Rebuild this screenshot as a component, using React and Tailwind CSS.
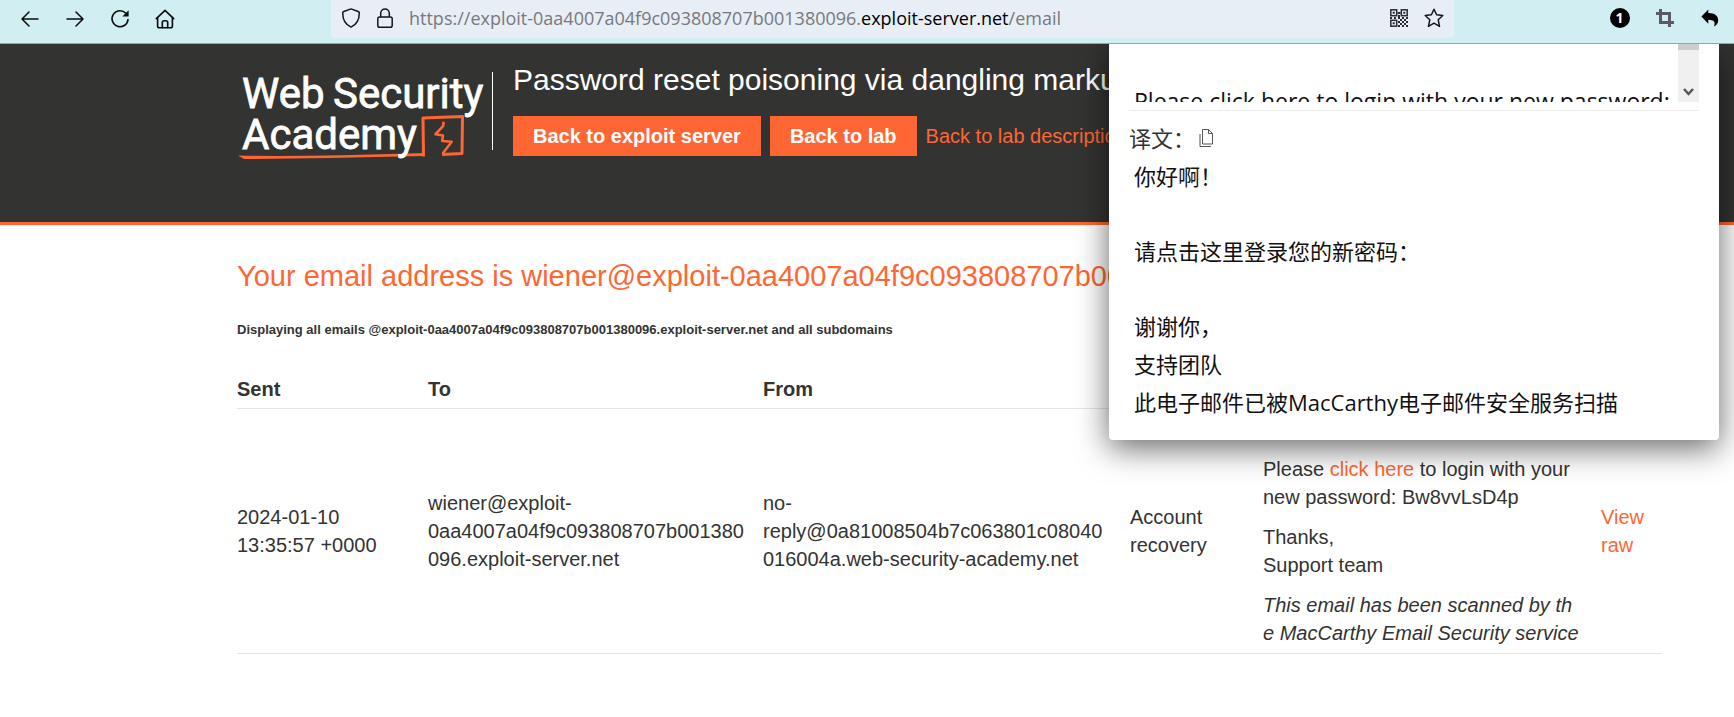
const toolButton = "flex h-8 w-[45px] items-center justify-center";

function ArrowIcon({ flip }) {
  return (
    <svg width="18" height="18" viewBox="0 0 18 18" className={flip ? "rotate-180" : ""} fill="none" stroke="#0c0c0d" strokeWidth="1.5" strokeLinecap="round" strokeLinejoin="round">
      <path d="M17 9H1M8 2L1 9l7 7" />
    </svg>
  );
}

function ReloadIcon() {
  return (
    <svg width="20" height="20" viewBox="0 0 20 20" fill="none" stroke="#0c0c0d" strokeWidth="1.6" strokeLinecap="round">
      <path d="M15.8 4.2A8 8 0 1 0 18 10.6" />
      <path d="M18.6 1.2v6.2h-6.2z" fill="#0c0c0d" stroke="none" />
    </svg>
  );
}

function HomeIcon() {
  return (
    <svg width="20" height="20" viewBox="0 0 20 20" fill="none" stroke="#0c0c0d" strokeWidth="1.6" strokeLinecap="round" strokeLinejoin="round">
      <path d="M1.3 9.6L10 1.3l8.7 8.3" />
      <path d="M2.6 8.8V17a1.8 1.8 0 0 0 1.8 1.8h11.2a1.8 1.8 0 0 0 1.8-1.8V8.8" />
      <path d="M7.3 18.6v-5a1.8 1.8 0 0 1 1.8-1.8h1.8a1.8 1.8 0 0 1 1.8 1.8v5" />
    </svg>
  );
}

function ShieldIcon() {
  return (
    <svg width="20" height="20" viewBox="0 0 20 20" fill="none" stroke="#15141a" strokeWidth="1.5" strokeLinejoin="round">
      <path d="M10 .9l7.2 2.6q1.1.4 1.1 1.6C18.3 12.5 15 17 10 19.1 5 17 1.7 12.5 1.7 5.1q0-1.2 1.1-1.6z" />
    </svg>
  );
}

function LockIcon() {
  return (
    <svg width="16" height="20" viewBox="0 0 16 20" fill="none" stroke="#15141a" strokeWidth="1.5">
      <rect x=".8" y="9" width="14.4" height="10.2" rx="1.8" />
      <path d="M3.7 9V5.2a4.3 4.3 0 0 1 8.6 0V9" />
    </svg>
  );
}

function QrIcon() {
  return (
    <svg width="18" height="18" viewBox="0 0 18 18" fill="#2b2a33">
      <g fill="none" stroke="#2b2a33" strokeWidth="1.5">
        <rect x=".8" y=".8" width="5.9" height="5.9" />
        <rect x="11.3" y=".8" width="5.9" height="5.9" />
        <rect x=".8" y="11.3" width="5.9" height="5.9" />
      </g>
      <path d="M2.7 2.7h2v2h-2zM13.3 2.7h2v2h-2zM2.7 13.3h2v2h-2zM7.5 3h3v2h-3zM8 6h2v2H8zM0 8h2v2H0zM4 8h2v2H4zM8 8h2v2H8zM12 8h2v2h-2zM16 8h2v2h-2zM10 10h2v2h-2zM14 10h2v2h-2zM8 12h2v2H8zM12 12h2v2h-2zM16 12h2v2h-2zM10 14h2v2h-2zM14 14h2v2h-2zM8 16h2v2H8zM12 16h2v2h-2zM16 16h2v2h-2z" />
    </svg>
  );
}

function StarIcon() {
  return (
    <svg width="20" height="20" viewBox="0 0 20 20" fill="none" stroke="#15141a" strokeWidth="1.5" strokeLinejoin="round">
      <path d="M10 1.2l2.6 5.6 6.2.7-4.6 4.2 1.3 6.7L10 15.2l-5.5 3.2 1.3-6.7L1.2 7.5l6.2-.7z" />
    </svg>
  );
}

function CropIcon() {
  return (
    <svg width="18" height="18" viewBox="0 0 18 18" fill="none" stroke="#5b5b66" strokeWidth="3">
      <path d="M4.5 0v13.5H18M0 4.5h13.5V18" />
    </svg>
  );
}

function ReplyIcon() {
  return (
    <svg width="18" height="18" viewBox="0 0 18 18" fill="#000">
      <path d="M7.3.4v3.7c6.4.1 9.9 2.6 9.9 7.3 0 2.6-1.7 4.9-4.3 6.2 1.9-4.4.3-6.7-5.6-6.8v3.9L.4 7.5z" />
    </svg>
  );
}

function CopyIcon() {
  return (
    <svg width="14" height="18" viewBox="0 0 14 18" fill="none" stroke="#555" strokeWidth="1">
      <path d="M3.5.5h6l4 4v10.5h-10zM9.5.5v4h4M1 5v12.5h11" />
    </svg>
  );
}

function Logo() {
  return (
    <svg width="256" height="94" viewBox="0 0 256 94" role="img" aria-label="Web Security Academy">
      <g fill="none" stroke="#f63" strokeLinejoin="round">
        <path d="M187.5 87.5L187 49l39.5-1.500L226 84.500l-20 1" strokeWidth="3" />
        <path d="M207.7 52.7l-.7 4.5-7.5 8 7.5 1.3-.8 5.5 9.5.8-9 11.7" strokeWidth="2.6" />
      </g>
      <path d="M2 86.500q60 1.500 186-2.500v3Q80 89.500 8 90z" fill="#f63" />
      <g fill="#fff" stroke="#fff" strokeWidth=".8" fontFamily="Roboto, sans-serif" fontSize="42">
        <text x="6" y="39">Web</text>
        <text x="97" y="39">Security</text>
        <text x="6" y="80">Academy</text>
      </g>
    </svg>
  );
}

function BrowserBar() {
  return (
    <div className="relative z-20 flex h-11 items-start border-b border-[#94a8ab] bg-[#d1eef2]">
      <div className="flex w-[331px] pt-[3px] pl-[7px]">
        <button aria-label="Back" className={toolButton}><ArrowIcon /></button>
        <button aria-label="Forward" className={toolButton}><ArrowIcon flip /></button>
        <button aria-label="Reload" className={toolButton}><ReloadIcon /></button>
        <button aria-label="Home" className={toolButton}><HomeIcon /></button>
      </div>
      <div className="flex h-[38px] min-w-0 flex-1 items-center gap-4 rounded-b-[4px] bg-[#e8eef5] px-[10px] pb-[2px]">
        <button aria-label="Tracking protection"><ShieldIcon /></button>
        <button aria-label="Site information"><LockIcon /></button>
        <div className="min-w-0 flex-1 truncate font-['Open_Sans',sans-serif] text-[18px] leading-6 text-[#77797d]" role="textbox" aria-label="Address" tabIndex={0}>
          https://exploit-0aa4007a04f9c093808707b001380096.<span className="text-black">exploit-server.net</span>/email
        </div>
        <button aria-label="QR code"><QrIcon /></button>
        <button aria-label="Bookmark this page"><StarIcon /></button>
      </div>
      <div className="flex w-[280px] justify-end pt-[2px] pr-[2px]">
        <button aria-label="Notifications" className={toolButton}>
          <span className="flex size-5 items-center justify-center rounded-full bg-black font-['Open_Sans',sans-serif] text-[14px] leading-none font-bold text-white">1</span>
        </button>
        <button aria-label="Crop" className={toolButton}><CropIcon /></button>
        <button aria-label="Undo" className={toolButton}><ReplyIcon /></button>
      </div>
    </div>
  );
}

function LabHeader() {
  return (
    <header className="h-[181px] overflow-hidden border-b-[3px] border-[#f63] bg-[#333332] pr-[72px] pl-[236px]">
      <div className="flex pt-[18px]">
        <a href="#academy" className="block shrink-0 pt-[7px]"><Logo /></a>
        <div className="mt-[10px] h-[78px] w-px shrink-0 bg-white" />
        <div className="min-w-0 pl-5">
          <h2 className="text-[30px] leading-9 whitespace-nowrap text-white">Password reset poisoning via dangling markup</h2>
          <div className="mt-[18px] flex h-10 items-center whitespace-nowrap">
            <a href="#exploit-server" className="bg-[#f63] px-5 leading-10 font-bold text-white">Back to exploit server</a>
            <a href="#lab" className="ml-[9px] bg-[#f63] px-5 leading-10 font-bold text-white">Back to lab</a>
            <a href="#description" className="ml-[9px] text-[#f63]">Back to lab description</a>
          </div>
        </div>
      </div>
    </header>
  );
}

function EmailTable() {
  return (
    <table className="mt-7 w-full table-fixed border-collapse text-left">
      <colgroup>
        <col className="w-[191px]" />
        <col className="w-[335px]" />
        <col className="w-[367px]" />
        <col className="w-[133px]" />
        <col className="w-[338px]" />
        <col />
      </colgroup>
      <thead>
        <tr className="border-b border-[#e5e5e5] align-middle">
          {["Sent", "To", "From", "Subject", "Body", ""].map((name) => (
            <th key={name} className="pt-[7px] pb-[5px] font-bold">{name}</th>
          ))}
        </tr>
      </thead>
      <tbody>
        <tr className="border-b border-[#e5e5e5] align-middle">
          <td className="pr-10">2024-01-10 13:35:57 +0000</td>
          <td className="pr-4 break-words">wiener@exploit-0aa4007a04f9c093808707b001380096.exploit-server.net</td>
          <td className="pr-[22px] break-words">no-reply@0a81008504b7c063801c08040016004a.web-security-academy.net</td>
          <td className="pr-10">Account recovery</td>
          <td className="py-[6px] pr-[18px]">
            <div className="flex flex-col gap-3">
              <p>Hello!</p>
              <p>Please <a href="#reset" className="text-[#f63]">click here</a> to login with your new password: Bw8vvLsD4p</p>
              <p>Thanks,<br />Support team</p>
              <p className="break-all italic">This email has been scanned by the MacCarthy Email Security service</p>
            </div>
          </td>
          <td className="pr-4"><a href="#raw" className="text-[#f63]">View raw</a></td>
        </tr>
      </tbody>
    </table>
  );
}

function TranslationPopup() {
  return (
    <aside lang="zh-CN" className="absolute top-11 right-[15px] z-10 w-[610px] rounded-b-[4px] bg-white px-5 pb-[19px] font-['Open_Sans','Noto_Sans_CJK_SC',sans-serif] shadow-[0_8px_32px_rgba(0,0,0,0.6)]">
      <div className="flex h-[58px] overflow-hidden">
        <p className="min-w-0 flex-1 overflow-hidden pt-[38px] pl-[5px] text-[23px] leading-[38px] whitespace-nowrap text-[#111]">Please click here to login with your new password:</p>
        <div className="flex w-[21px] flex-col justify-between bg-[#f0f0f0]">
          <div className="h-[6px] bg-[#cdcdcd]" />
          <svg width="21" height="20" viewBox="0 0 21 20" fill="none" stroke="#555" strokeWidth="2.5"><path d="M6 7l4.5 5L15 7" /></svg>
        </div>
      </div>
      <div className="mt-2 border-t border-[#eee] pt-2">
        <div className="flex items-center gap-1 text-[22px] leading-[38px] text-[#333]">
          <span>译文：</span>
          <button aria-label="Copy translation"><CopyIcon /></button>
        </div>
        <div className="flex flex-col gap-[37px] pl-[5px] text-[22px] leading-[38px] whitespace-nowrap text-[#111]">
          <p>你好啊！</p>
          <p>请点击这里登录您的新密码：</p>
          <p>谢谢你，<br />支持团队<br />此电子邮件已被MacCarthy电子邮件安全服务扫描</p>
        </div>
      </div>
    </aside>
  );
}

export default function App() {
  return (
    <div className="relative min-h-screen overflow-hidden bg-white font-['Liberation_Sans',Arial,sans-serif] text-[20px] leading-7 text-[#333332]">
      <BrowserBar />
      <LabHeader />
      <main className="pt-[33px] pr-[72px] pl-[237px]">
        <h1 className="text-[29px] leading-9 whitespace-nowrap text-[#f63]">Your email address is wiener@exploit-0aa4007a04f9c093808707b001380096.exploit-server.net</h1>
        <h4 className="mt-[26px] text-[13px] leading-5 font-bold">Displaying all emails @exploit-0aa4007a04f9c093808707b001380096.exploit-server.net and all subdomains</h4>
        <EmailTable />
      </main>
      <TranslationPopup />
    </div>
  );
}
